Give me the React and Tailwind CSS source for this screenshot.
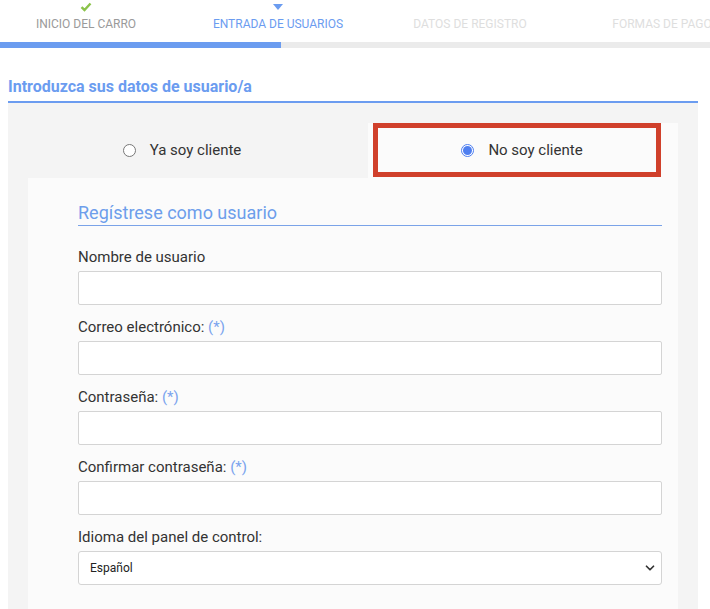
import React from 'react';
import { ChevronDown } from 'lucide-react';

const steps = [
  { label: 'INICIO DEL CARRO', state: 'done' },
  { label: 'ENTRADA DE USUARIOS', state: 'active' },
  { label: 'DATOS DE REGISTRO', state: 'todo' },
  { label: 'FORMAS DE PAGO', state: 'todo' },
];

const StepMark = ({ state }) => {
  if (state === 'done') {
    return (
      <svg width="12" height="10" viewBox="0 0 12 10">
        <path d="M1.5 5.2 L4.5 8 L10.5 1.5" fill="none" stroke="#8bc34a" strokeWidth="2.4" />
      </svg>
    );
  }
  if (state === 'active') {
    return (
      <svg width="12" height="8" viewBox="0 0 12 8">
        <path d="M1 1 L11 1 L6 7 Z" fill="#6b9cf0" />
      </svg>
    );
  }
  return <span className="h-[8px]" />;
};

const Field = ({ label, required, first }) => (
  <div className={first ? 'mt-[21px]' : 'mt-[12px]'}>
    <label className="block h-[20px] text-[15px] leading-[21px] text-[#333]">
      {label}
      {required && <span className="text-[#7aa3ee]"> (*)</span>}
    </label>
    <input type="text" className="mt-[4px] block h-[34px] w-full rounded-[2px] border border-[#d4d4d4] bg-white outline-none" />
  </div>
);

const Radio = ({ checked }) =>
  checked ? (
    <span className="flex h-[13px] w-[13px] items-center justify-center rounded-full border border-[#4f7ff0] bg-white">
      <span className="h-[9px] w-[9px] rounded-full bg-[#4f7ff0]" />
    </span>
  ) : (
    <span className="h-[13px] w-[13px] rounded-full border border-[#777] bg-white" />
  );

export default function App() {
  return (
    <div className="h-[609px] w-[710px] overflow-hidden bg-white" style={{ fontFamily: 'Roboto, "Liberation Sans", sans-serif' }}>
      {/* steps */}
      <div className="-ml-[10px] flex w-[768px]">
        {steps.map((s) => (
          <div key={s.label} className="flex w-[192px] flex-col items-center pt-[1px]">
            <div className="flex h-[11px] items-center">
              <StepMark state={s.state} />
            </div>
            <div
              className={`mt-[4px] text-[12px] leading-[16px] ${
                s.state === 'done' ? 'text-[#9a9a9a]' : s.state === 'active' ? 'text-[#6b9cf0]' : 'text-[#dedede]'
              }`}
            >
              {s.label}
            </div>
          </div>
        ))}
      </div>
      <div className="mt-[10px] flex h-[6px] w-full bg-[#ebebeb]">
        <div className="h-full w-[281px] bg-[#6b9cf0]" />
      </div>

      {/* section */}
      <div className="ml-[8px] mr-[12px] mt-[29px]">
        <h1 className="border-b-2 border-[#6b9cf0] pb-[4px] text-[16px] font-bold leading-[20px] text-[#6b9cf0]">
          Introduzca sus datos de usuario/a
        </h1>
        <div className="h-[520px] bg-[#f4f4f4] pl-[20px] pr-[20px] pt-[20px]">
          <div className="flex h-[55px]">
            <div className="flex w-[340px] items-center justify-center gap-[14px] pr-[32px] text-[15px] text-[#333]">
              <Radio />
              <span>Ya soy cliente</span>
            </div>
            <div className="flex-1 bg-[#fbfbfb] pl-[5px] pr-[17px]">
              <div className="flex h-[54px] items-center justify-center gap-[14px] border-[5px] border-[#d0402b] pl-[10px] text-[15px] text-[#333]">
                <Radio checked />
                <span>No soy cliente</span>
              </div>
            </div>
          </div>

          <div className="h-[440px] bg-[#fbfbfb] pl-[50px] pr-[16px] pt-[23px]">
            <h2 className="border-b border-[#7aa3e8] text-[18px] leading-[24px] text-[#6d9eeb]">Regístrese como usuario</h2>
            <Field label="Nombre de usuario" first />
            <Field label="Correo electrónico:" required />
            <Field label="Contraseña:" required />
            <Field label="Confirmar contraseña:" required />
            <div className="mt-[12px]">
              <label className="block h-[20px] text-[15px] leading-[21px] text-[#333]">Idioma del panel de control:</label>
              <div className="relative mt-[4px] flex h-[34px] items-center rounded-[3px] border border-[#d4d4d4] bg-white pl-[11px] text-[12px] text-[#222]">
                Español
                <ChevronDown size={14} strokeWidth={3} className="absolute right-[4px] text-[#333]" />
              </div>
            </div>
          </div>
        </div>
      </div>
    </div>
  );
}
